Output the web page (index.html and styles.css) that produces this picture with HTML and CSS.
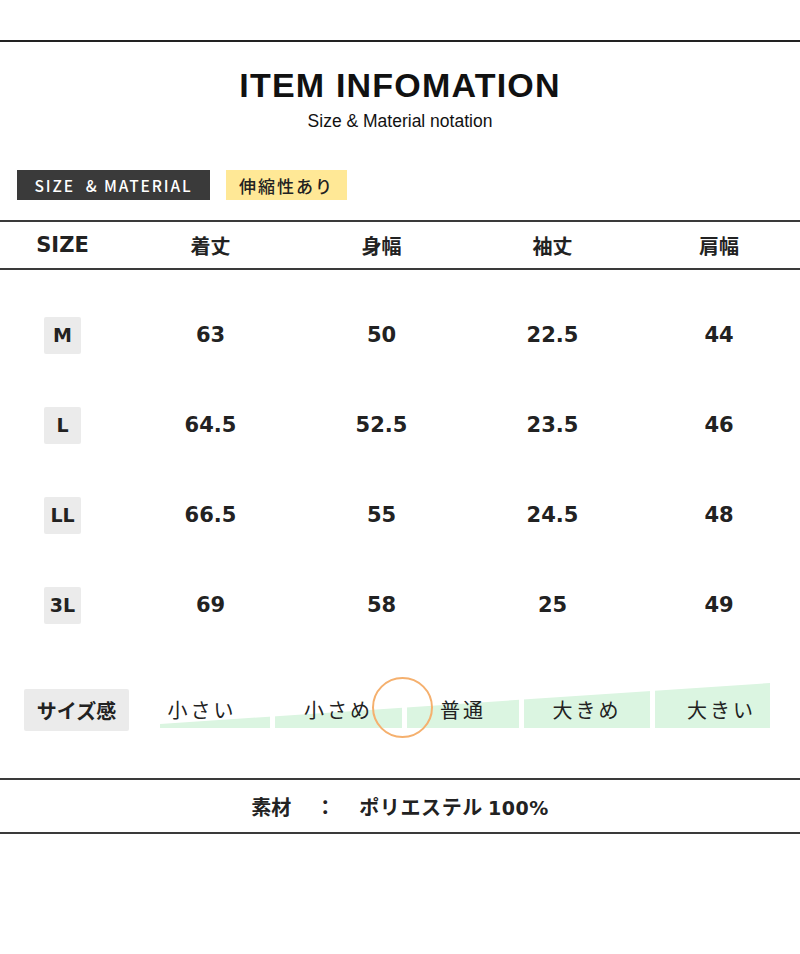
FILE: index.html
```html
<!DOCTYPE html>
<html lang="ja">
<head>
<meta charset="utf-8">
<link rel="stylesheet" href="styles.css">
</head>
<body>
<div class="page">
  <div class="top-rule"></div>
  <header class="head">
    <h1 class="title">ITEM INFOMATION</h1>
    <p class="subtitle">Size &amp; Material notation</p>
  </header>

  <div class="tags">
    <span class="tag tag-dark">SIZE &nbsp;&amp; MATERIAL</span>
    <span class="tag tag-yellow">伸縮性あり</span>
  </div>

  <div class="table">
    <div class="row head-row">
      <div class="cell en">SIZE</div>
      <div class="cell">着丈</div>
      <div class="cell">身幅</div>
      <div class="cell">袖丈</div>
      <div class="cell">肩幅</div>
    </div>
    <div class="body">
      <div class="row data-row">
        <div class="cell"><span class="size">M</span></div>
        <div class="cell num">63</div>
        <div class="cell num">50</div>
        <div class="cell num">22.5</div>
        <div class="cell num">44</div>
      </div>
      <div class="row data-row">
        <div class="cell"><span class="size">L</span></div>
        <div class="cell num">64.5</div>
        <div class="cell num">52.5</div>
        <div class="cell num">23.5</div>
        <div class="cell num">46</div>
      </div>
      <div class="row data-row">
        <div class="cell"><span class="size">LL</span></div>
        <div class="cell num">66.5</div>
        <div class="cell num">55</div>
        <div class="cell num">24.5</div>
        <div class="cell num">48</div>
      </div>
      <div class="row data-row">
        <div class="cell"><span class="size">3L</span></div>
        <div class="cell num">69</div>
        <div class="cell num">58</div>
        <div class="cell num">25</div>
        <div class="cell num">49</div>
      </div>
    </div>
  </div>

  <div class="feel">
    <div class="feel-label">サイズ感</div>
    <div class="scale">
      <div class="bar">
        <span class="seg s1"></span>
        <span class="seg s2"></span>
        <span class="seg s3"></span>
        <span class="seg s4"></span>
        <span class="seg s5"></span>
      </div>
      <div class="labels">
        <span class="lbl s1 l1">小さい</span>
        <span class="lbl s2">小さめ</span>
        <span class="lbl s3">普通</span>
        <span class="lbl s4">大きめ</span>
        <span class="lbl s5 l5">大きい</span>
      </div>
      <div class="marker"></div>
    </div>
  </div>

  <div class="material">
    <span class="mat-key">素材</span><span class="mat-colon">：</span><span class="mat-val">ポリエステル <span class="mat-num">100%</span></span>
  </div>
</div>
</body>
</html>
```

FILE: styles.css
```css
* { box-sizing: border-box; }
html, body { margin: 0; padding: 0; background: #fff; }
body {
  width: 800px;
  color: #222;
  font-family: "Noto Sans CJK JP", "Noto Sans", sans-serif;
}

.top-rule {
  margin-top: 40px;
  border-top: 2px solid #222;
}

.head {
  padding-top: 23px;
  text-align: center;
}
.title {
  margin: 0;
  font-family: "Liberation Sans", Arial, sans-serif;
  font-weight: bold;
  font-size: 34px;
  line-height: 40px;
  letter-spacing: 1.2px;
  color: #111;
}
.subtitle {
  margin: 6px 0 0;
  font-family: "Liberation Sans", Arial, sans-serif;
  font-size: 17.5px;
  line-height: 20px;
  color: #111;
}

.tags {
  display: flex;
  gap: 16px;
  margin-top: 39px;
  padding-left: 17px;
}
.tag {
  height: 30px;
  display: flex;
  align-items: center;
  justify-content: center;
}
.tag-dark {
  width: 193px;
  background: #3a3a3a;
  color: #fff;
  font-family: "Noto Sans CJK JP", "Noto Sans", sans-serif;
  font-weight: 500;
  font-size: 15.5px;
  letter-spacing: 1.9px;
}
.tag-yellow {
  width: 121px;
  background: #ffe896;
  color: #222;
  font-weight: 500;
  font-size: 17px;
  letter-spacing: 2px;
}

.table { margin-top: 20px; }
.row {
  display: grid;
  grid-template-columns: 125px 171px 171px 171px 1fr;
  align-items: center;
}
.cell { text-align: center; }
.head-row {
  height: 50px;
  border-top: 2px solid #3a3a3a;
  border-bottom: 2px solid #3a3a3a;
  font-weight: bold;
  font-size: 20px;
}
.head-row .en {
  font-family: "DejaVu Sans", Verdana, sans-serif;
  font-size: 21px;
}
.body { padding-top: 20px; }
.data-row { height: 90px; }
.num {
  font-family: "DejaVu Sans", Verdana, sans-serif;
  font-weight: bold;
  font-size: 21px;
}
.size {
  display: inline-flex;
  align-items: center;
  justify-content: center;
  width: 37px;
  height: 37px;
  background: #ebebeb;
  border-radius: 2px;
  font-family: "DejaVu Sans", Verdana, sans-serif;
  font-weight: bold;
  font-size: 19px;
}

.feel {
  display: flex;
  align-items: flex-end;
  margin-top: 33px;
  padding-left: 24px;
}
.feel-label {
  width: 105px;
  height: 42px;
  background: #ebebeb;
  border-radius: 2px;
  display: flex;
  align-items: center;
  justify-content: center;
  font-weight: bold;
  font-size: 20px;
}
.scale {
  position: relative;
  width: 610px;
  height: 45px;
  margin-left: 31px;
  margin-bottom: 3px;
}
.bar {
  position: absolute;
  inset: 0;
  display: flex;
  gap: 5px;
  clip-path: polygon(0 100%, 0 91%, 100% 0, 100% 100%);
}
.seg { background: #dbf5e1; height: 100%; }
.s1 { width: 110px; }
.s2 { width: 127px; }
.s3 { width: 112px; }
.s4 { width: 126px; }
.s5 { width: 115px; }
.labels {
  position: absolute;
  inset: 0;
  display: flex;
  gap: 5px;
}
.lbl {
  display: block;
  padding-top: 14px;
  text-align: center;
  font-size: 20px;
  line-height: 26px;
  letter-spacing: 3px;
  color: #222;
}
.l1 { padding-right: 26px; }
.l5 { padding-left: 18px; }
.marker {
  position: absolute;
  left: 212px;
  top: -6px;
  width: 61px;
  height: 61px;
  border: 2.5px solid #f5b06e;
  border-radius: 50%;
}

.material {
  margin-top: 47px;
  height: 56px;
  border-top: 2px solid #3a3a3a;
  border-bottom: 2px solid #3a3a3a;
  display: flex;
  align-items: center;
  justify-content: center;
  font-weight: bold;
  font-size: 20px;
}
.mat-colon { margin: 0 24px; }
.mat-val { letter-spacing: 0.6px; }
.mat-num {
  font-family: "DejaVu Sans", Verdana, sans-serif;
  font-size: 19px;
  letter-spacing: 0.5px;
}
```
